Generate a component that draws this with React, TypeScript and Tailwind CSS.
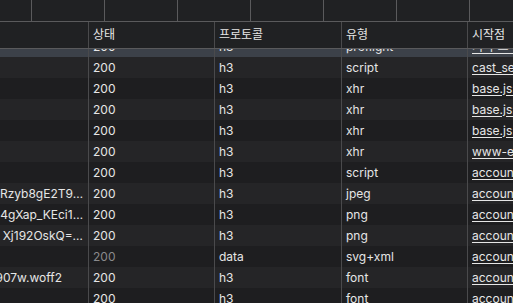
type Row = {
  name: string;
  nameCls: string;
  status: string;
  muted?: boolean;
  protocol: string;
  type: string;
  initiator: string;
};

const rows: Row[] = [
  { name: '', nameCls: '', status: '200', protocol: 'h3', type: 'script', initiator: 'cast_sender.js' },
  { name: '', nameCls: '', status: '200', protocol: 'h3', type: 'xhr', initiator: 'base.js:1062' },
  { name: '', nameCls: '', status: '200', protocol: 'h3', type: 'xhr', initiator: 'base.js:1062' },
  { name: '', nameCls: '', status: '200', protocol: 'h3', type: 'xhr', initiator: 'base.js:1062' },
  { name: '', nameCls: '', status: '200', protocol: 'h3', type: 'xhr', initiator: 'www-embed-player.js' },
  { name: '', nameCls: '', status: '200', protocol: 'h3', type: 'script', initiator: 'accounts.google.com' },
  { name: 'frRzyb8gE2T9…', nameCls: 'pr-[5px]', status: '200', protocol: 'h3', type: 'jpeg', initiator: 'accounts.google.com' },
  { name: 'a4gXap_KEci1…', nameCls: 'pr-[5px]', status: '200', protocol: 'h3', type: 'png', initiator: 'accounts.google.com' },
  { name: 'Xj192OskQ=…', nameCls: 'pr-[5px]', status: '200', protocol: 'h3', type: 'png', initiator: 'accounts.google.com' },
  { name: '', nameCls: '', status: '200', muted: true, protocol: 'data', type: 'svg+xml', initiator: 'accounts.google.com' },
  { name: 'J907w.woff2', nameCls: 'pr-[26px]', status: '200', protocol: 'h3', type: 'font', initiator: 'accounts.google.com' },
  { name: '', nameCls: '', status: '200', protocol: 'h3', type: 'font', initiator: 'accounts.google.com' },
];

function Cells({ row }: { row: Row }) {
  return (
    <>
      <div className={`w-[89px] shrink-0 h-full flex items-center justify-end overflow-hidden whitespace-nowrap border-r border-[#4a4a4c] ${row.nameCls}`}>
        {row.name}
      </div>
      <div className={`w-[126px] shrink-0 h-full flex items-center pl-[4px] border-r border-[#4a4a4c] ${row.muted ? 'text-[#8a8a8c]' : ''}`}>
        {row.status}
      </div>
      <div className="w-[127px] shrink-0 h-full flex items-center pl-[4px] border-r border-[#4a4a4c]">
        {row.protocol}
      </div>
      <div className="w-[126px] shrink-0 h-full flex items-center pl-[4px] border-r border-[#4a4a4c]">
        {row.type}
      </div>
      <div className="flex-1 min-w-0 h-full flex items-center pl-[4px] overflow-hidden whitespace-nowrap">
        <span className="underline underline-offset-2">{row.initiator}</span>
      </div>
    </>
  );
}

export default function App(): React.JSX.Element {
  return (
    <div className="w-[513px] h-[303px] overflow-hidden bg-[#202123] text-[#e6e6e6] text-[12px] font-['Inter','Noto_Sans_CJK_KR',sans-serif] flex flex-col">
      {/* toolbar strip */}
      <div className="h-[22px] shrink-0 flex border-b border-[#5a5a5c]">
        <div className="w-[32px] shrink-0 border-r border-[#5a5a5c]" />
        <div className="w-[73px] shrink-0 border-r border-[#5a5a5c]" />
        <div className="w-[73px] shrink-0 border-r border-[#5a5a5c]" />
        <div className="w-[73px] shrink-0 border-r border-[#5a5a5c]" />
        <div className="w-[73px] shrink-0 border-r border-[#5a5a5c]" />
        <div className="w-[73px] shrink-0 border-r border-[#5a5a5c]" />
        <div className="w-[73px] shrink-0 border-r border-[#5a5a5c]" />
        <div className="flex-1" />
      </div>

      {/* header */}
      <div className="h-[27px] shrink-0 flex border-b border-[#5a5a5c] bg-[#202123] relative z-10">
        <div className="w-[89px] shrink-0 border-r border-[#4a4a4c]" />
        <div className="w-[126px] shrink-0 flex items-center pl-[4px] border-r border-[#4a4a4c]">상태</div>
        <div className="w-[127px] shrink-0 flex items-center pl-[4px] border-r border-[#4a4a4c]">프로토콜</div>
        <div className="w-[126px] shrink-0 flex items-center pl-[4px] border-r border-[#4a4a4c]">유형</div>
        <div className="flex-1 flex items-center pl-[4px] whitespace-nowrap overflow-hidden">시작점</div>
      </div>

      {/* body */}
      <div className="flex-1 min-h-0 overflow-hidden flex flex-col">
        <div className="h-[21px] shrink-0 -mt-[13px] flex bg-[#3c4149]">
          <Cells row={{ name: '', nameCls: '', status: '200', protocol: 'h3', type: 'preflight', initiator: '기타 프리플라이트' }} />
        </div>
        {rows.map((row, i) => (
          <div key={i} className={`h-[21px] shrink-0 flex ${i % 2 === 0 ? 'bg-[#252527]' : 'bg-[#1e1e20]'}`}>
            <Cells row={row} />
          </div>
        ))}
      </div>
    </div>
  );
}
